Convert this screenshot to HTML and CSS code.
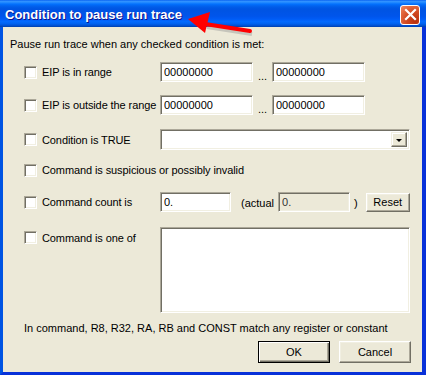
FILE: index.html
```html
<!DOCTYPE html>
<html lang="en">
<head>
    <meta charset="UTF-8">
    <title>Condition to pause run trace</title>
    <link rel="stylesheet" href="styles.css">
</head>
<body>
    <div class="window">
        <div class="titlebar">
            <span class="title">Condition to pause run trace</span>
            <button class="close" aria-label="Close">
                <svg width="13" height="13" viewBox="0 0 13 13"><path d="M2 2 L11 11 M11 2 L2 11" stroke="#fff" stroke-width="2.2" stroke-linecap="square"/></svg>
            </button>
        </div>
        <div class="client">
            <p class="intro">Pause run trace when any checked condition is met:</p>
            <div class="rows">
                <div class="row row-1">
                    <label class="check"><span class="box"></span>EIP is in range</label>
                    <div class="fields">
                        <input class="edit addr" type="text" value="00000000">
                        <span class="dots">...</span>
                        <input class="edit addr" type="text" value="00000000">
                    </div>
                </div>
                <div class="row row-2">
                    <label class="check"><span class="box"></span>EIP is outside the range</label>
                    <div class="fields">
                        <input class="edit addr" type="text" value="00000000">
                        <span class="dots">...</span>
                        <input class="edit addr" type="text" value="00000000">
                    </div>
                </div>
                <div class="row row-3">
                    <label class="check"><span class="box"></span>Condition is TRUE</label>
                    <div class="combo">
                        <span class="combo-text"></span>
                        <span class="combo-btn"><span class="arrow"></span></span>
                    </div>
                </div>
                <div class="row row-4">
                    <label class="check"><span class="box"></span>Command is suspicious or possibly invalid</label>
                </div>
                <div class="row row-5">
                    <label class="check"><span class="box"></span>Command count is</label>
                    <div class="fields">
                        <input class="edit count" type="text" value="0.">
                        <span class="actual">(actual</span>
                        <input class="edit count readonly" type="text" value="0." readonly>
                        <span class="paren">)</span>
                        <button class="btn reset">Reset</button>
                    </div>
                </div>
                <div class="row row-6">
                    <label class="check"><span class="box"></span>Command is one of</label>
                    <textarea class="edit commands"></textarea>
                </div>
            </div>
            <p class="note">In command, R8, R32, RA, RB and CONST match any register or constant</p>
            <div class="actions">
                <button class="btn default">OK</button>
                <button class="btn">Cancel</button>
            </div>
        </div>
        <svg class="pointer" width="80" height="34" viewBox="180 6 80 34">
            <path d="M207 27 L252 34" stroke="#9a9a9a" stroke-width="4" opacity="0.45"/>
            <path d="M205 24 L250 31" stroke="#f00" stroke-width="4" stroke-linecap="round"/>
            <polygon points="188,19 210,12 205,33" fill="#f00"/>
        </svg>
    </div>
</body>
</html>
```

FILE: styles.css
```css
:root {
    --face: #ece9d8;
    --shadow: #aca899;
    --dark: #716f64;
    --light: #f1efe2;
    --frame: #0831d9;
}
* {
    box-sizing: border-box;
}
body {
    margin: 0;
    font-family: 'Liberation Sans', Arial, sans-serif;
    font-size: 11px;
    color: #000;
}
.window {
    position: relative;
    width: 426px;
    height: 375px;
    display: flex;
    flex-direction: column;
    overflow: hidden;
}
.titlebar {
    height: 27px;
    flex: none;
    display: flex;
    align-items: center;
    justify-content: space-between;
    padding: 0 6px 0 5px;
    background: linear-gradient(to bottom, #0058ee 0%, #3593ff 4%, #288eff 8%, #127dff 12%, #036ffc 16%, #0262ee 22%, #0057e5 30%, #0054e3 36%, #0055eb 60%, #005bf5 70%, #026afe 80%, #0062ef 88%, #0052d6 94%, #0040ab 100%);
}
.title {
    color: #fff;
    font-weight: bold;
    font-size: 13px;
    text-shadow: 1px 1px #0f1089;
    padding-top: 2px;
}
.close {
    width: 20px;
    height: 20px;
    margin-top: 2px;
    padding: 0;
    border: 1px solid #fff;
    border-radius: 3px;
    background: radial-gradient(circle at 80% 85%, #b8300f 0%, #d24a22 45%, #e36a40 75%, #ef8a66 100%);
    display: flex;
    align-items: center;
    justify-content: center;
}
.client {
    flex: 1;
    background: var(--face);
    border-left: 3px solid var(--frame);
    border-right: 4px solid var(--frame);
    border-bottom: 3px solid var(--frame);
    border-color: #0054e3 #0831d9 #0831d9 #0054e3;
    padding: 0 7px;
}
.intro {
    margin: 11px 0 0;
    line-height: 13px;
}
.rows {
    margin: 11px 0 0 14px;
}
.row {
    display: grid;
    grid-template-columns: 136px 1fr;
    align-items: start;
}
.row-1 { height: 33px; }
.row-2 { height: 34px; }
.row-3 { height: 31px; }
.row-4 { height: 32px; }
.row-5 { height: 35px; }
.row-6 { height: 86px; }
.check {
    display: flex;
    align-items: center;
    gap: 5px;
    height: 20px;
    white-space: nowrap;
    letter-spacing: -0.1px;
}
.row-3 .check {
    height: 21px;
}
.row-6 .check {
    height: 17px;
    margin-top: 2px;
}
.box {
    width: 13px;
    height: 13px;
    flex: none;
    background: #fff;
    border: 1px solid;
    border-color: var(--shadow) #fff #fff var(--shadow);
    box-shadow: inset 1px 1px var(--dark), inset -1px -1px var(--light);
}
.fields {
    display: flex;
    align-items: center;
    height: 20px;
}
.edit {
    font: inherit;
    color: #000;
    background: #fff;
    border: 1px solid;
    border-color: var(--shadow) #fff #fff var(--shadow);
    box-shadow: inset 1px 1px var(--dark), inset -1px -1px var(--light);
    padding: 2px 3px;
    margin: 0;
    outline: none;
}
.addr {
    width: 93px;
    height: 20px;
}
.dots {
    width: 19px;
    text-align: center;
    align-self: flex-end;
    line-height: 12px;
}
.combo {
    width: 250px;
    height: 21px;
    background: #fff;
    border: 1px solid;
    border-color: var(--shadow) #fff #fff var(--shadow);
    box-shadow: inset 1px 1px var(--dark), inset -1px -1px var(--light);
    display: flex;
    justify-content: flex-end;
    padding: 2px;
}
.combo-btn {
    width: 16px;
    height: 15px;
    background: var(--face);
    border: 1px solid;
    border-color: var(--light) var(--dark) var(--dark) var(--light);
    box-shadow: inset -1px -1px var(--shadow), inset 1px 1px #fff;
    display: flex;
    align-items: center;
    justify-content: center;
}
.arrow {
    width: 0;
    height: 0;
    border-left: 3px solid transparent;
    border-right: 3px solid transparent;
    border-top: 3px solid #000;
    margin-top: 1px;
}
.count {
    width: 71px;
    height: 20px;
}
.readonly {
    width: 72px;
    background: var(--face);
    color: #333;
}
.actual {
    margin: 0 4px 0 10px;
    padding-top: 2px;
}
.paren {
    margin: 0 8px 0 4px;
    padding-top: 2px;
}
.commands {
    width: 250px;
    height: 86px;
    resize: none;
}
.note {
    margin: 9px 0 0 14px;
    line-height: 13px;
}
.actions {
    display: flex;
    justify-content: flex-end;
    gap: 9px;
    margin: 6px 4px 0 0;
}
.btn {
    font: inherit;
    color: #000;
    background: var(--face);
    border: 1px solid;
    border-color: #fff var(--dark) var(--dark) #fff;
    box-shadow: inset -1px -1px var(--shadow), inset 1px 1px var(--light);
    padding: 0;
    width: 72px;
    height: 22px;
}
.btn.default {
    border-color: #000;
    box-shadow: inset 1px 1px #fff, inset -1px -1px var(--dark), inset -2px -2px var(--shadow);
}
.reset {
    width: 44px;
    height: 19px;
}
.pointer {
    position: absolute;
    left: 180px;
    top: 6px;
}
```
